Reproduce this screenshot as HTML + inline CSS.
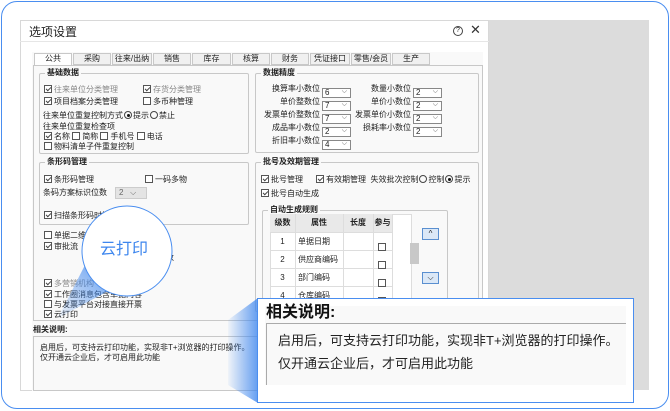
<!DOCTYPE html>
<html><head><meta charset="utf-8"><style>
*{margin:0;padding:0;box-sizing:border-box}
body{width:670px;height:411px;background:#fff;position:relative;overflow:hidden;font-family:"Liberation Sans","Noto Sans CJK SC",sans-serif;color:#222}
.a{position:absolute;white-space:nowrap}
.t{font-size:8px;line-height:10px}
.cb{display:inline-block;width:8px;height:8px;border:1px solid #555;background:#fff;vertical-align:-1px;margin-right:2px;position:relative}
.cb.c::after{content:"";position:absolute;left:2px;top:0px;width:2px;height:4px;border:solid #444;border-width:0 1px 1px 0;transform:rotate(45deg)}
.g{color:#888}
.grp{position:absolute;border:1px solid #c8c8c8;border-radius:2px}
.gt{position:absolute;top:-6px;left:5px;background:#f9f9f9;padding:0 2px;font-size:8px;font-weight:bold;line-height:10px}
.sel{display:inline-block;width:29px;height:10px;border:1px solid #888;background:#fff;font-size:8px;line-height:8px;padding-left:2px;vertical-align:middle;position:relative}
.sel::after{content:"⌵";position:absolute;right:3px;top:-1px;font-size:7px;color:#555}
.tab{position:absolute;top:53px;height:12px;border:1px solid #c8c8c8;background:#f0f0f0;font-size:8px;line-height:10px;text-align:center}
.rd{display:inline-block;width:8px;height:8px;border:1px solid #444;border-radius:50%;vertical-align:-1px;position:relative;margin:0 1px}
.rd.on::after{content:"";position:absolute;left:1.5px;top:1.5px;width:3px;height:3px;border-radius:50%;background:#111}
</style></head><body>
<div class="a" style="left:1px;top:1px;width:668px;height:408px;border:1.5px solid #4a8ef0;border-radius:16px"></div>
<div class="a" style="left:489px;top:20px;width:160px;height:370px;background:#dcdcdc"></div>
<div class="a" style="left:20px;top:20px;width:469px;height:371px;background:#fff;border:1px solid #d8d8d8"></div>
<div class="a" style="left:29px;top:24px;font-size:12px;line-height:16px;color:#222">选项设置</div>
<div class="a" style="left:453px;top:26px;width:10px;height:10px;border:1px solid #444;border-radius:50%;font-size:7px;line-height:8px;text-align:center">?</div>
<div class="a" style="left:470px;top:22px;font-size:13px;color:#333">✕</div>
<div class="a" style="left:20px;top:41px;width:469px;border-top:1px solid #e6e6e6"></div>
<div class="a" style="left:32px;top:52px;width:451px;height:339px;background:#f9f9f9"></div>
<div class="tab" style="left:34px;width:38px;background:#fff;border-bottom:none;height:13px">公共</div>
<div class="tab" style="left:73px;width:38px">采购</div>
<div class="tab" style="left:112px;width:40px">往来/出纳</div>
<div class="tab" style="left:153px;width:38px">销售</div>
<div class="tab" style="left:192px;width:39px">库存</div>
<div class="tab" style="left:232px;width:38px">核算</div>
<div class="tab" style="left:271px;width:38px">财务</div>
<div class="tab" style="left:310px;width:40px">凭证接口</div>
<div class="tab" style="left:351px;width:40px">零售/会员</div>
<div class="tab" style="left:392px;width:38px">生产</div>
<div class="a" style="left:33px;top:65px;width:450px;height:256px;border:1px solid #c8c8c8;background:#f9f9f9"></div>

<div class="grp" style="left:39px;top:73px;width:210px;height:81px"><div class="gt">基础数据</div></div>
<div class="a t g" style="left:44px;top:85px"><span class="cb c"></span>往来单位分类管理</div>
<div class="a t g" style="left:143px;top:85px"><span class="cb c"></span>存货分类管理</div>
<div class="a t" style="left:44px;top:97px"><span class="cb c"></span>项目档案分类管理</div>
<div class="a t" style="left:143px;top:97px"><span class="cb"></span>多币种管理</div>
<div class="a t" style="left:43px;top:111px">往来单位重复控制方式<span class="rd on"></span>提示<span class="rd"></span>禁止</div>
<div class="a t" style="left:43px;top:122px">往来单位重复检查项</div>
<div class="a t" style="left:44px;top:132px"><span class="cb c"></span>名称 <span class="cb"></span>简称 <span class="cb"></span>手机号 <span class="cb"></span>电话</div>
<div class="a t" style="left:44px;top:142px"><span class="cb"></span>物料清单子件重复控制</div>

<div class="grp" style="left:39px;top:162px;width:210px;height:63px"><div class="gt">条形码管理</div></div>
<div class="a t" style="left:44px;top:175px"><span class="cb c"></span>条形码管理</div>
<div class="a t" style="left:145px;top:175px"><span class="cb"></span>一码多物</div>
<div class="a t" style="left:43px;top:188px">条码方案标识位数</div>
<div class="a" style="left:115px;top:187px;width:32px;height:12px;background:#e4e4e4;border:1px solid #ccc;font-size:8px;line-height:10px;padding-left:3px;color:#666">2 &nbsp;&nbsp;⌵</div>
<div class="a t" style="left:44px;top:211px"><span class="cb c"></span>扫描条形码时提</div>
<div class="a t" style="left:44px;top:231px"><span class="cb"></span>单据二维码</div>
<div class="a t" style="left:44px;top:242px"><span class="cb c"></span>审批流</div>
<div class="a t" style="left:166px;top:253px">改</div>
<div class="a t g" style="left:44px;top:279px"><span class="cb c"></span>多营销机构</div>
<div class="a t" style="left:44px;top:290px"><span class="cb c"></span>工作圈消息包含单据内容</div>
<div class="a t" style="left:44px;top:300px"><span class="cb"></span>与发票平台对接直接开票</div>
<div class="a t" style="left:44px;top:310px"><span class="cb c"></span>云打印</div>
<div class="a" style="left:33px;top:325px;font-size:8px;font-weight:bold;line-height:10px">相关说明:</div>
<div class="a" style="left:33px;top:336px;width:450px;height:55px;border:1px solid #c8c8c8;background:#f9f9f9"></div>
<div class="a t" style="left:40px;top:343px">启用后，可支持云打印功能，实现非T+浏览器的打印操作。</div>
<div class="a t" style="left:40px;top:353px">仅开通云企业后，才可启用此功能</div>

<div class="grp" style="left:255px;top:73px;width:224px;height:80px"><div class="gt">数据精度</div></div>
<div class="a t" style="left:256px;top:84px;width:64px;text-align:right">换算率小数位</div><div class="a" style="left:322px;top:84px"><span class="sel">6</span></div>
<div class="a t" style="left:256px;top:97px;width:64px;text-align:right">单价整数位</div><div class="a" style="left:322px;top:97px"><span class="sel">7</span></div>
<div class="a t" style="left:256px;top:110px;width:64px;text-align:right">发票单价整数位</div><div class="a" style="left:322px;top:110px"><span class="sel">7</span></div>
<div class="a t" style="left:256px;top:123px;width:64px;text-align:right">成品率小数位</div><div class="a" style="left:322px;top:123px"><span class="sel">2</span></div>
<div class="a t" style="left:256px;top:136px;width:64px;text-align:right">折旧率小数位</div><div class="a" style="left:322px;top:136px"><span class="sel">4</span></div>
<div class="a t" style="left:355px;top:84px;width:56px;text-align:right">数量小数位</div><div class="a" style="left:413px;top:84px"><span class="sel">2</span></div>
<div class="a t" style="left:355px;top:97px;width:56px;text-align:right">单价小数位</div><div class="a" style="left:413px;top:97px"><span class="sel">2</span></div>
<div class="a t" style="left:355px;top:110px;width:56px;text-align:right">发票单价小数位</div><div class="a" style="left:413px;top:110px"><span class="sel">2</span></div>
<div class="a t" style="left:355px;top:123px;width:56px;text-align:right">损耗率小数位</div><div class="a" style="left:413px;top:123px"><span class="sel">2</span></div>

<div class="grp" style="left:255px;top:162px;width:224px;height:150px"><div class="gt">批号及效期管理</div></div>
<div class="a t" style="left:261px;top:175px"><span class="cb c"></span>批号管理</div>
<div class="a t" style="left:316px;top:175px"><span class="cb c"></span>有效期管理 &nbsp;失效批次控制<span class="rd"></span>控制<span class="rd on"></span>提示</div>
<div class="a t" style="left:261px;top:189px"><span class="cb c"></span>批号自动生成</div>
<div class="grp" style="left:262px;top:210px;width:186px;height:100px"><div class="gt">自动生成规则</div></div>
<div class="a" style="left:270px;top:214px;width:142px;height:96px;background:#fff;border:1px solid #ddd"></div>
<div class="a" style="left:270px;top:214px;width:122px;height:18px;background:#e9e9e9"></div>
<div class="a t" style="left:270px;top:218px;width:25px;text-align:center;font-weight:bold">级数</div>
<div class="a t" style="left:295px;top:218px;width:48px;text-align:center;font-weight:bold">属性</div>
<div class="a t" style="left:343px;top:218px;width:30px;text-align:center;font-weight:bold">长度</div>
<div class="a t" style="left:373px;top:218px;width:19px;text-align:center;font-weight:bold">参与</div>
<div class="a" style="left:295px;top:214px;height:96px;border-left:1px solid #ddd"></div>
<div class="a" style="left:343px;top:214px;height:96px;border-left:1px solid #ddd"></div>
<div class="a" style="left:373px;top:214px;height:96px;border-left:1px solid #ddd"></div>
<div class="a" style="left:392px;top:214px;height:96px;border-left:1px solid #ddd"></div>
<div class="a" style="left:270px;top:232px;width:122px;border-top:1px solid #ddd"></div>
<div class="a" style="left:270px;top:250px;width:122px;border-top:1px solid #ddd"></div>
<div class="a" style="left:270px;top:268px;width:122px;border-top:1px solid #ddd"></div>
<div class="a" style="left:270px;top:286px;width:122px;border-top:1px solid #ddd"></div>
<div class="a t" style="left:270px;top:237px;width:25px;text-align:center">1</div><div class="a t" style="left:298px;top:237px">单据日期</div><div class="a" style="left:378px;top:237px"><span class="cb"></span></div>
<div class="a t" style="left:270px;top:255px;width:25px;text-align:center">2</div><div class="a t" style="left:298px;top:255px">供应商编码</div><div class="a" style="left:378px;top:255px"><span class="cb"></span></div>
<div class="a t" style="left:270px;top:273px;width:25px;text-align:center">3</div><div class="a t" style="left:298px;top:273px">部门编码</div><div class="a" style="left:378px;top:273px"><span class="cb"></span></div>
<div class="a t" style="left:270px;top:291px;width:25px;text-align:center">4</div><div class="a t" style="left:298px;top:291px">仓库编码</div><div class="a" style="left:378px;top:291px"><span class="cb"></span></div>
<div class="a" style="left:410px;top:243px;width:9px;height:21px;background:#c8c8c8"></div>
<div class="a" style="left:422px;top:228px;width:17px;height:12px;background:#dbe8f7;border:1px solid #5a8fd0;font-size:8px;line-height:9px;text-align:center">^</div>
<div class="a" style="left:422px;top:272px;width:17px;height:12px;background:#dbe8f7;border:1px solid #5a8fd0;font-size:8px;line-height:9px;text-align:center">⌵</div>

<svg class="a" style="left:0;top:0" width="670" height="411">
<defs><linearGradient id="g1" x1="1" y1="0" x2="0" y2="1"><stop offset="0" stop-color="#3d86ee" stop-opacity=".8"/><stop offset="1" stop-color="#3d86ee" stop-opacity=".05"/></linearGradient>
<linearGradient id="g2" x1="1" y1="0" x2="0" y2="0"><stop offset="0" stop-color="#3d86ee" stop-opacity=".8"/><stop offset="1" stop-color="#3d86ee" stop-opacity=".05"/></linearGradient></defs>
<polygon points="85,265 110,290 58,318" fill="url(#g1)"/>
<polygon points="258,298 258,403 228,385 228,320" fill="url(#g2)"/>
<circle cx="127" cy="251" r="45" fill="#fff" stroke="#4a8ef0" stroke-width="1"/>
</svg>
<div class="a" style="left:100px;top:240px;font-size:16px;line-height:20px;color:#3d86ee">云打印</div>

<div class="a" style="left:257px;top:298px;width:377px;height:105px;background:#fff;border:1.5px solid #4a8ef0"></div>
<div class="a" style="left:265px;top:306px;width:361px;height:79px;background:#f9f9f9"></div>
<div class="a" style="left:266px;top:303px;font-size:16px;font-weight:bold;line-height:20px;color:#111">相关说明:</div>
<div class="a" style="left:266px;top:323px;width:360px;height:62px;border-top:1px solid #aaa;border-left:1px solid #aaa"></div>
<div class="a" style="left:278px;top:332px;font-size:13px;line-height:17px;color:#222">启用后，可支持云打印功能，实现非T+浏览器的打印操作。</div>
<div class="a" style="left:278px;top:355px;font-size:13px;line-height:17px;color:#222">仅开通云企业后，才可启用此功能</div>
</body></html>
